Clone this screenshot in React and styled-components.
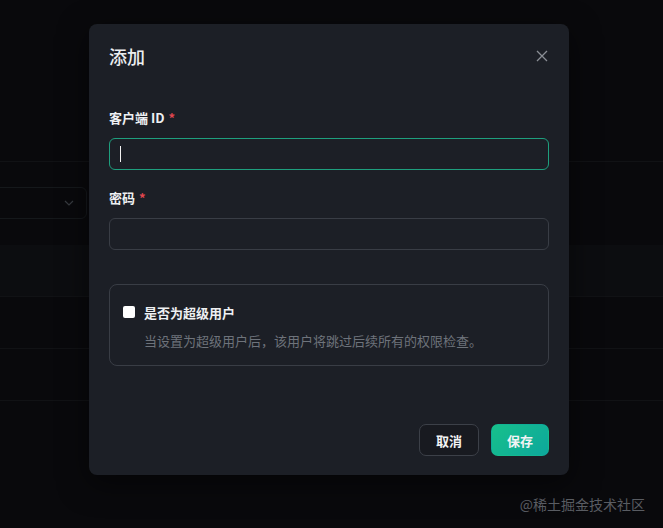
import React from "react";
import styled, { createGlobalStyle } from "styled-components";

const Global = createGlobalStyle`
  html, body { margin: 0; padding: 0; background: #0c0d10; }
  body { font-family: "Noto Sans CJK SC", "Noto Sans", sans-serif; color: #e8e9eb; }
  * { box-sizing: border-box; }
`;

const Page = styled.div`
  position: relative;
  width: 663px;
  height: 528px;
  overflow: hidden;
  background: #0c0d10;
`;

const TopArea = styled.div`
  height: 162px;
  border-bottom: 1px solid #17191d;
`;

const Toolbar = styled.div`
  height: 83px;
  display: flex;
  align-items: flex-start;
  padding-top: 25px;
`;

const Select = styled.div`
  margin-left: -20px;
  width: 107px;
  height: 32px;
  border: 1px solid #1d2025;
  border-radius: 6px;
  display: flex;
  align-items: center;
  justify-content: flex-end;
  padding-right: 11px;
  color: #4a4e55;
`;

const Row = styled.div`
  height: ${(p) => p.$h}px;
  background: ${(p) => (p.$head ? "#101216" : "transparent")};
  border-bottom: 1px solid #17191d;
`;

const Overlay = styled.div`
  position: absolute;
  inset: 0;
  background: rgba(0, 0, 0, 0.25);
`;

const Modal = styled.div`
  position: absolute;
  left: 89px;
  top: 24px;
  width: 480px;
  height: 451px;
  background: #1c1f26;
  border-radius: 8px;
  box-shadow: 0 8px 30px rgba(0, 0, 0, 0.5);
  padding: 20px 20px 19px;
  display: flex;
  flex-direction: column;
`;

const Header = styled.div`
  display: flex;
  align-items: center;
  justify-content: space-between;
  height: 24px;
`;

const Title = styled.div`
  font-size: 18px;
  font-weight: 500;
  color: #eceef0;
  line-height: 24px;
`;

const Close = styled.div`
  width: 14px;
  height: 14px;
  display: flex;
  align-items: center;
  justify-content: center;
  color: #8a8e95;
`;

const Body = styled.div`
  padding-top: 40px;
  display: flex;
  flex-direction: column;
  flex: 1;
`;

const Label = styled.div`
  font-size: 13px;
  font-weight: 700;
  line-height: 20px;
  color: #eef0f2;
  margin-bottom: 10px;
  display: flex;
  gap: 4px;
`;

const Star = styled.span`
  color: #e0464f;
`;

const Field = styled.div`
  height: 32px;
  border: 1px solid ${(p) => (p.$focus ? "#1e9f7e" : "#393d45")};
  border-radius: 6px;
  display: flex;
  align-items: center;
  padding-left: 10px;
  margin-bottom: ${(p) => p.$mb}px;
`;

const Caret = styled.span`
  width: 1px;
  height: 16px;
  background: #f2f2f2;
`;

const OptionBox = styled.div`
  border: 1px solid #393d45;
  border-radius: 8px;
  padding: 17px 13px 14px;
  display: flex;
  flex-direction: column;
  gap: 9px;
`;

const CheckRow = styled.div`
  display: flex;
  align-items: center;
  gap: 9px;
  height: 20px;
`;

const Box = styled.span`
  width: 12px;
  height: 12px;
  background: #ffffff;
  border-radius: 2px;
`;

const CheckLabel = styled.span`
  font-size: 13px;
  font-weight: 700;
  color: #eef0f2;
`;

const Desc = styled.div`
  padding-left: 21px;
  font-size: 13px;
  line-height: 20px;
  color: #6e737b;
`;

const Footer = styled.div`
  margin-top: auto;
  display: flex;
  justify-content: flex-end;
  gap: 12px;
`;

const Button = styled.button`
  height: 32px;
  padding: 0 ${(p) => (p.$primary ? 15 : 16)}px;
  border-radius: 7px;
  font-family: inherit;
  font-size: 13px;
  font-weight: 700;
  color: #f2f3f4;
  border: 1px solid ${(p) => (p.$primary ? "transparent" : "#3c4048")};
  background: ${(p) =>
    p.$primary ? "linear-gradient(135deg, #17c08b 0%, #0da79c 100%)" : "#181a20"};
  cursor: pointer;
`;

const Watermark = styled.div`
  position: absolute;
  right: 18px;
  bottom: 14px;
  font-size: 14px;
  color: #595c62;
`;

export default function App() {
  return (
    <Page>
      <Global />
      <TopArea />
      <Toolbar>
        <Select>
          <svg width="12" height="12" viewBox="0 0 12 12" fill="none">
            <path d="M2 4l4 4 4-4" stroke="currentColor" strokeWidth="1.2" />
          </svg>
        </Select>
      </Toolbar>
      <Row $head $h={52} />
      <Row $h={52} />
      <Row $h={52} />
      <Overlay />
      <Modal>
        <Header>
          <Title>添加</Title>
          <Close>
            <svg width="12" height="12" viewBox="0 0 12 12" fill="none">
              <path d="M1 1l10 10M11 1L1 11" stroke="currentColor" strokeWidth="1.3" />
            </svg>
          </Close>
        </Header>
        <Body>
          <Label>
            客户端 ID <Star>*</Star>
          </Label>
          <Field $focus $mb={18}>
            <Caret />
          </Field>
          <Label>
            密码 <Star>*</Star>
          </Label>
          <Field $mb={34} />
          <OptionBox>
            <CheckRow>
              <Box />
              <CheckLabel>是否为超级用户</CheckLabel>
            </CheckRow>
            <Desc>当设置为超级用户后，该用户将跳过后续所有的权限检查。</Desc>
          </OptionBox>
          <Footer>
            <Button>取消</Button>
            <Button $primary>保存</Button>
          </Footer>
        </Body>
      </Modal>
      <Watermark>@稀土掘金技术社区</Watermark>
    </Page>
  );
}
